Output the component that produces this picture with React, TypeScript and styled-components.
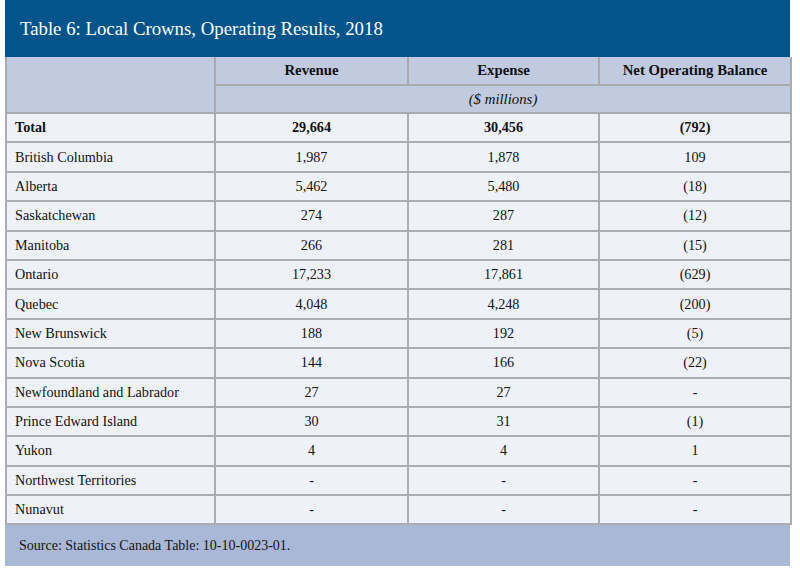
import styled, { createGlobalStyle } from "styled-components";

const GlobalStyle = createGlobalStyle`
  html, body {
    margin: 0;
    padding: 0;
    background: #ffffff;
  }
  body {
    font-family: "Liberation Serif", "DejaVu Serif", serif;
  }
`;

const rows: [string, string, string, string][] = [
  ["British Columbia", "1,987", "1,878", "109"],
  ["Alberta", "5,462", "5,480", "(18)"],
  ["Saskatchewan", "274", "287", "(12)"],
  ["Manitoba", "266", "281", "(15)"],
  ["Ontario", "17,233", "17,861", "(629)"],
  ["Quebec", "4,048", "4,248", "(200)"],
  ["New Brunswick", "188", "192", "(5)"],
  ["Nova Scotia", "144", "166", "(22)"],
  ["Newfoundland and Labrador", "27", "27", "-"],
  ["Prince Edward Island", "30", "31", "(1)"],
  ["Yukon", "4", "4", "1"],
  ["Northwest Territories", "-", "-", "-"],
  ["Nunavut", "-", "-", "-"],
];

const Panel = styled.div`
  width: 785px;
  margin-left: 5px;
`;

const TitleBar = styled.div`
  height: 57px;
  background: #03548b;
  color: #ffffff;
  display: flex;
  align-items: center;
  padding-left: 15px;
  font-size: 18.8px;
`;

const Table = styled.table`
  width: 100%;
  border-collapse: collapse;
  table-layout: fixed;
  color: #111111;
  font-family: "Liberation Serif", "DejaVu Serif", serif;
  font-size: 14.2px;
`;

const HeadCell = styled.th<{ $italic?: boolean; $h?: number }>`
  background: #c1cbe0;
  border: 2px solid #a9abb0;
  border-top: none;
  height: ${(p) => p.$h ?? 26}px;
  padding: 0;
  text-align: center;
  font-size: 14.8px;
  font-weight: ${(p) => (p.$italic ? "normal" : "bold")};
  font-style: ${(p) => (p.$italic ? "italic" : "normal")};
`;

const Cell = styled.td<{ $bold?: boolean; $label?: boolean }>`
  background: #eef1f8;
  border: 2px solid #acadb2;
  height: 27.4px;
  padding: 0 0 0 ${(p) => (p.$label ? "8px" : "0")};
  text-align: ${(p) => (p.$label ? "left" : "center")};
  font-weight: ${(p) => (p.$bold ? "bold" : "normal")};
`;

const Footer = styled.div`
  height: 41px;
  background: #a8b8d6;
  color: #151515;
  font-size: 14px;
  display: flex;
  align-items: center;
  padding-left: 14px;
`;

export default function App() {
  return (
    <Panel>
      <GlobalStyle />
      <TitleBar>Table 6: Local Crowns, Operating Results, 2018</TitleBar>
      <Table>
        <colgroup>
          <col style={{ width: 209 }} />
          <col style={{ width: 193 }} />
          <col style={{ width: 191 }} />
          <col style={{ width: 192 }} />
        </colgroup>
        <thead>
          <tr>
            <HeadCell rowSpan={2} />
            <HeadCell $h={27}>Revenue</HeadCell>
            <HeadCell $h={27}>Expense</HeadCell>
            <HeadCell $h={27}>Net Operating Balance</HeadCell>
          </tr>
          <tr>
            <HeadCell colSpan={3} $italic>
              ($ millions)
            </HeadCell>
          </tr>
        </thead>
        <tbody>
          <tr>
            <Cell $label $bold>
              Total
            </Cell>
            <Cell $bold>29,664</Cell>
            <Cell $bold>30,456</Cell>
            <Cell $bold>(792)</Cell>
          </tr>
          {rows.map(([name, rev, exp, net]) => (
            <tr key={name}>
              <Cell $label>{name}</Cell>
              <Cell>{rev}</Cell>
              <Cell>{exp}</Cell>
              <Cell>{net}</Cell>
            </tr>
          ))}
        </tbody>
      </Table>
      <Footer>Source: Statistics Canada Table: 10-10-0023-01.</Footer>
    </Panel>
  );
}
